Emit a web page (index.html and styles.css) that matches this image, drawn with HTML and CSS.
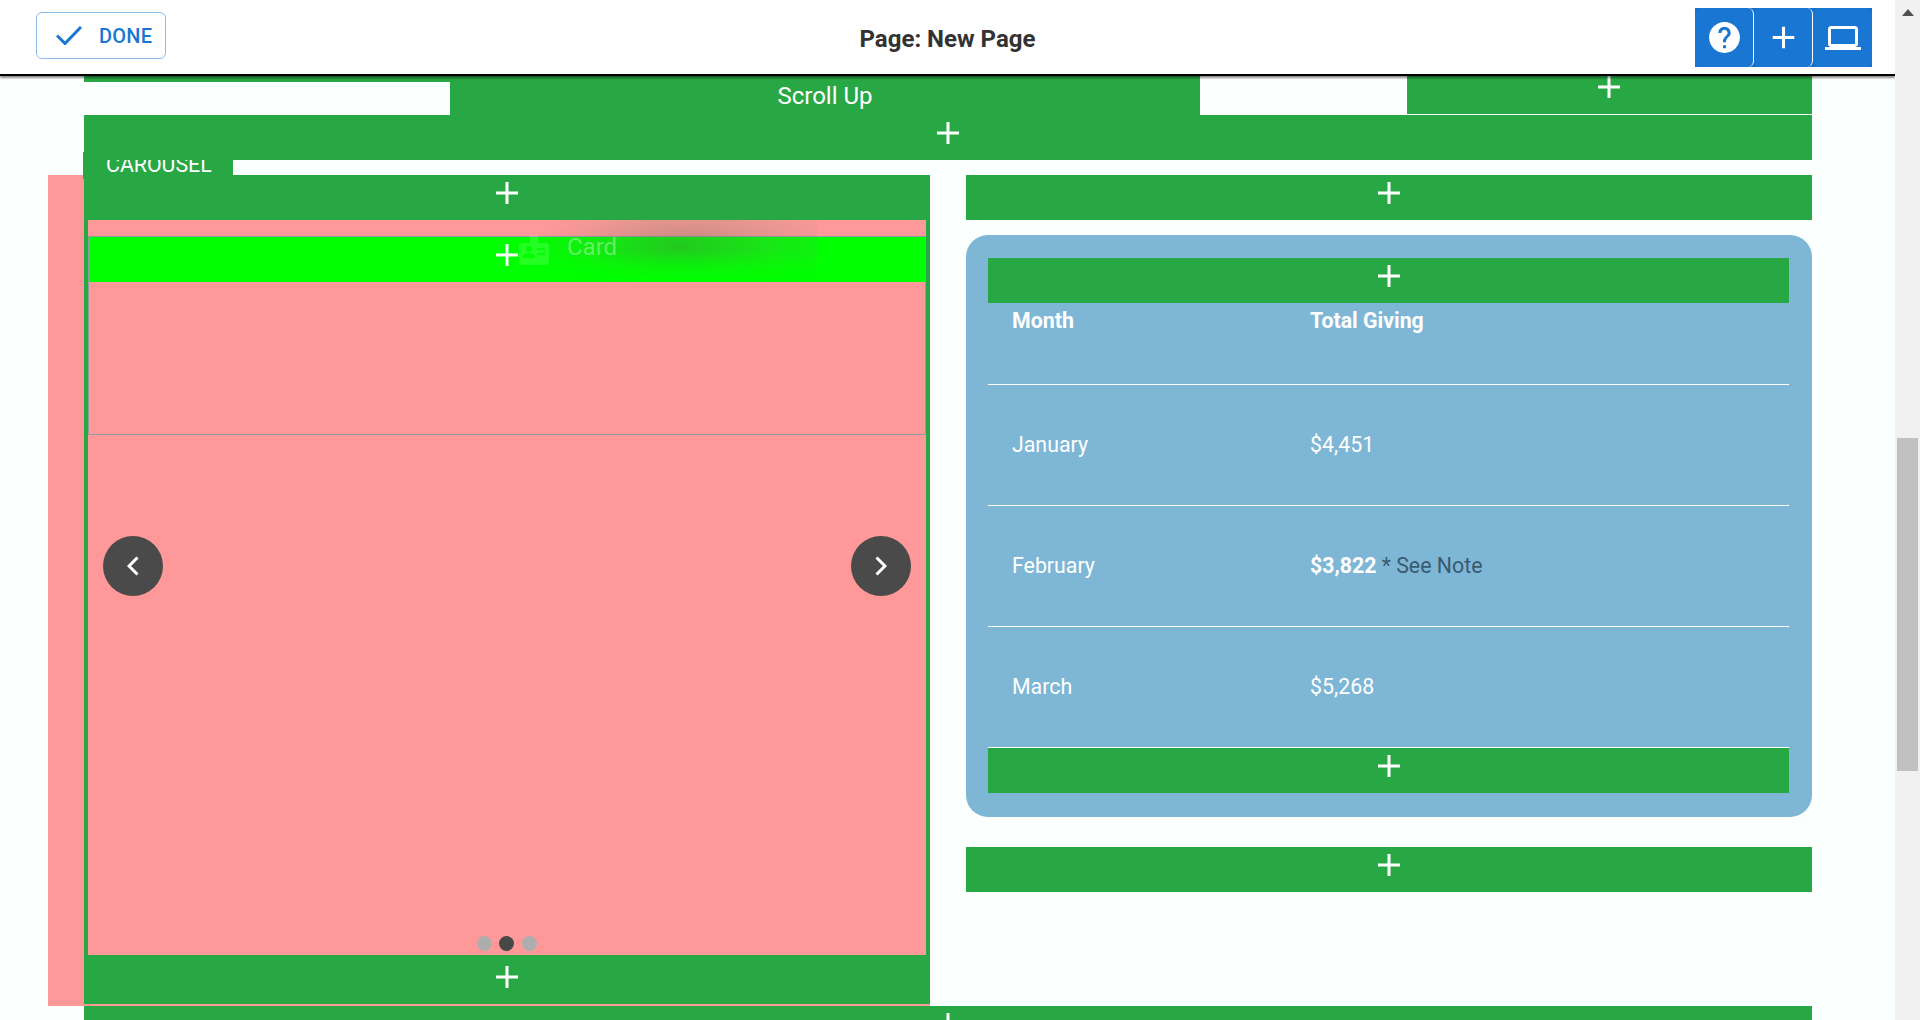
FILE: index.html
```html
<!DOCTYPE html>
<html lang="en">
<head>
<meta charset="utf-8">
<title>Page: New Page</title>
<link rel="stylesheet" href="styles.css">
</head>
<body>
<div class="app">
  <div class="main">
    <header class="topbar">
      <button class="done-btn">
        <svg class="done-check" viewBox="0 0 26 19" width="26" height="19"><polyline points="1,9.5 9,17.5 25,1" fill="none" stroke="#1976d2" stroke-width="3"/></svg>
        <span>DONE</span>
      </button>
      <h1 class="page-title">Page: New Page</h1>
      <div class="tool-group">
        <button class="tool-btn"><svg viewBox="0 0 24 24" width="37" height="37"><path fill="#fff" d="M12 2C6.48 2 2 6.48 2 12s4.48 10 10 10 10-4.48 10-10S17.52 2 12 2zm1 17h-2v-2h2v2zm2.07-7.75l-.9.92C13.45 12.9 13 13.5 13 15h-2v-.5c0-1.1.45-2.1 1.17-2.83l1.24-1.26c.37-.36.59-.86.59-1.41 0-1.1-.9-2-2-2s-2 .9-2 2H8c0-2.21 1.79-4 4-4s4 1.79 4 4c0 .88-.36 1.68-.93 2.25z"/></svg></button>
        <button class="tool-btn"><svg viewBox="0 0 24 24" width="37" height="37"><path fill="#fff" d="M19 13h-6v6h-2v-6H5v-2h6V5h2v6h6v2z"/></svg></button>
        <button class="tool-btn"><svg viewBox="0 0 24 24" width="36" height="36"><path fill="#fff" d="M20 18c1.1 0 1.99-.9 1.99-2L22 6c0-1.1-.9-2-2-2H4c-1.1 0-2 .9-2 2v10c0 1.1.9 2 2 2H0v2h24v-2h-4zM4 6h16v10H4V6z"/></svg></button>
      </div>
    </header>

    <div class="content">
      <div class="scroll-row">
        <div class="strip"></div>
        <div class="scroll-up">Scroll Up</div>
        <div class="spacer"></div>
        <div class="add-bar add-bar-short"><svg class="plus" viewBox="0 0 22 22"><path d="M11 0v22M0 11h22"/></svg></div>
      </div>
      <div class="add-bar add-bar-above"><svg class="plus" viewBox="0 0 22 22"><path d="M11 0v22M0 11h22"/></svg></div>

      <div class="columns">
        <section class="left-col">
          <div class="rail"></div>
          <div class="tab">CAROUSEL</div>
          <div class="add-bar"><svg class="plus" viewBox="0 0 22 22"><path d="M11 0v22M0 11h22"/></svg></div>
          <div class="carousel">
            <div class="slide">
              <div class="add-bar add-bar-lime"><svg class="plus" viewBox="0 0 22 22"><path d="M11 0v22M0 11h22"/></svg></div>
            </div>
            <div class="drag-ghost">
              <svg class="ghost-icon" viewBox="0 0 30 30" width="30" height="30"><path fill="#fff" fill-rule="evenodd" d="M11 0h8v8h8a3 3 0 0 1 3 3v16a3 3 0 0 1-3 3H3a3 3 0 0 1-3-3V11a3 3 0 0 1 3-3h8zM7 14a3 3 0 1 0 6 0 3 3 0 0 0-6 0zM4 23h12v-2c0-2-4-3-6-3s-6 1-6 3zM18 13v2h8v-2zM18 18v2h8v-2z"/></svg>
              <span class="ghost-label">Card</span>
            </div>
            <button class="arrow arrow-prev"><svg viewBox="0 0 12 20" width="12" height="20"><polyline points="10.5,1.5 2,10 10.5,18.5" fill="none" stroke="#fff" stroke-width="3"/></svg></button>
            <button class="arrow arrow-next"><svg viewBox="0 0 12 20" width="12" height="20"><polyline points="1.5,1.5 10,10 1.5,18.5" fill="none" stroke="#fff" stroke-width="3"/></svg></button>
            <div class="dots"><span class="dot"></span><span class="dot dot-active"></span><span class="dot"></span></div>
          </div>
          <div class="add-bar add-bar-bottom"><svg class="plus" viewBox="0 0 22 22"><path d="M11 0v22M0 11h22"/></svg></div>
        </section>

        <section class="right-col">
          <div class="add-bar"><svg class="plus" viewBox="0 0 22 22"><path d="M11 0v22M0 11h22"/></svg></div>
          <div class="giving-card">
            <div class="add-bar"><svg class="plus" viewBox="0 0 22 22"><path d="M11 0v22M0 11h22"/></svg></div>
            <div class="giving-table">
              <div class="t-row t-head"><div>Month</div><div>Total Giving</div></div>
              <div class="t-row"><div>January</div><div>$4,451</div></div>
              <div class="t-row"><div>February</div><div><strong>$3,822</strong> <span class="note">* See Note</span></div></div>
              <div class="t-row"><div>March</div><div>$5,268</div></div>
            </div>
            <div class="add-bar"><svg class="plus" viewBox="0 0 22 22"><path d="M11 0v22M0 11h22"/></svg></div>
          </div>
          <div class="add-bar"><svg class="plus" viewBox="0 0 22 22"><path d="M11 0v22M0 11h22"/></svg></div>
        </section>
      </div>

      <div class="add-bar"><svg class="plus" viewBox="0 0 22 22"><path d="M11 0v22M0 11h22"/></svg></div>
    </div>
  </div>

  <div class="scrollbar">
    <div class="scroll-arrow"></div>
    <div class="scroll-thumb"></div>
  </div>
</div>
</body>
</html>
```
FILE: styles.css
```css
* { box-sizing: border-box; }
html, body { margin: 0; height: 100%; overflow: hidden; }
body { font-family: Roboto, "Liberation Sans", sans-serif; background: #fbfffe; color: #fff; }
button { font-family: inherit; cursor: pointer; }

.app { display: flex; height: 1020px; overflow: hidden; }
.main { flex: 1; min-width: 0; overflow: hidden; }

.topbar {
  position: relative; z-index: 5;
  height: 76px;
  background: #fff;
  border-bottom: 2px solid #000;
  box-shadow: 0 2px 2px rgba(0,0,0,.45);
  display: flex; align-items: flex-start; justify-content: space-between;
  padding: 8px 23px 0 36px;
}
.done-btn {
  width: 130px; height: 47px; margin-top: 4px;
  background: #fff;
  border: 1px solid #8dbdec; border-radius: 6px;
  color: #1976d2;
  font-size: 20px; font-weight: 500; letter-spacing: .2px;
  display: flex; align-items: center; padding: 0 0 0 19px; gap: 17px;
}
.done-check { flex: none; }
.page-title {
  position: absolute; left: 0; right: 0; top: 23px;
  margin: 0; text-align: center;
  font-size: 24px; line-height: 32px; font-weight: 700; color: #333;
}
.tool-group { display: flex; background: #166fc7; height: 59px; }
.tool-btn {
  width: 59px; height: 59px; padding: 0;
  background: #1976d2;
  border: 0; border-right: 1px solid #fff; border-radius: 6px;
  display: flex; align-items: center; justify-content: center;
}
.tool-btn:last-child { border-right: 0; }

.content { padding: 0 83px 0 84px; }

.scroll-row { display: grid; grid-template-columns: 366px 750px 207px 405px; height: 39px; }
.strip { background: #28a745; height: 6px; }
.scroll-up {
  background: #28a745; text-align: center;
  font-size: 24px; line-height: 30px; padding-top: 5px;
}

.add-bar {
  position: relative;
  height: 45px; padding-top: 7px;
  background: #28a745;
  display: flex; justify-content: center; align-items: flex-start;
}
.plus { width: 22px; height: 22px; flex: none; }
.plus path { fill: none; stroke: #fff; stroke-width: 3; }

.add-bar-short { height: 39px; padding: 0 1px 0 0; border-bottom: 1px solid #fff; }
.add-bar-above { z-index: 2; }
.add-bar-lime { background: #0f0; }
.add-bar-bottom { height: 49px; padding-top: 11px; }

.columns { display: grid; grid-template-columns: 846px 846px; gap: 36px; margin-top: 15px; }

.left-col { position: relative; background: #ff9999; padding-bottom: 2px; height: 831px; }
.rail { position: absolute; left: -36px; top: 0; bottom: 0; width: 36px; background: #ff9999; }
.tab {
  position: absolute; left: -1px; top: -23px; z-index: 1;
  width: 150px; height: 27px;
  background: #28a745;
  font-size: 21.33px; line-height: 21px; padding: 2px 0 0 23px;
}
.left-col > .add-bar { z-index: 0; }

.carousel {
  position: relative;
  height: 735px; padding-top: 16px;
  background: #ff9999;
  border-left: 4px solid #28a745; border-right: 4px solid #28a745;
}
.slide { height: 199px; border: 1px solid #8f9f9f; padding: 0; }

.drag-ghost {
  position: absolute; left: 430px; top: 0; width: 299px; height: 62px;
  display: flex; align-items: flex-start; gap: 18px;
  padding: 15px 0 0 1px;
}
.drag-ghost::before {
  content: ""; position: absolute; inset: 0;
  background:
    radial-gradient(ellipse 150px 46px at 54% 42%, rgba(90,110,80,.36), rgba(110,130,100,.15) 60%, rgba(110,130,100,0) 100%),
    linear-gradient(to right, rgba(130,140,130,0) 25%, rgba(130,140,130,.08));
  -webkit-mask-image: linear-gradient(to bottom, #000 50%, transparent 100%);
  mask-image: linear-gradient(to bottom, #000 50%, transparent 100%);
}
.ghost-icon { position: relative; opacity: .14; flex: none; }
.ghost-label { position: relative; top: -1px; font-size: 24px; line-height: 26px; color: rgba(255,255,255,.35); }

.arrow {
  position: absolute; top: 316px;
  width: 60px; height: 60px; padding: 0;
  border: 0; border-radius: 50%;
  background: #4a4a4a;
  display: flex; align-items: center; justify-content: center;
}
.arrow-prev { left: 15px; }
.arrow-next { right: 15px; }

.dots { position: absolute; left: 0; right: 1px; bottom: 4px; display: flex; justify-content: center; gap: 7.5px; }
.dot { width: 15px; height: 15px; border-radius: 50%; background: #adadad; }
.dot-active { background: #484848; }

.giving-card {
  margin: 15px 0 30px;
  background: #7eb6d6;
  border-radius: 22px;
  padding: 23px 23px 24px 22px;
}
.t-row {
  display: grid; grid-template-columns: 298px 1fr; align-items: center;
  height: 121px; padding-left: 24px;
  border-bottom: 1px solid #fff;
  font-size: 21.33px; line-height: 24px;
}
.t-head { height: 82px; align-items: start; padding-top: 6px; font-weight: 700; }
.t-row strong { font-weight: 700; }
.note { color: #3a5a70; }

.scrollbar { position: relative; flex: none; width: 25px; background: #f1f1f1; }
.scroll-arrow {
  position: absolute; left: 7px; top: 9px; width: 0; height: 0;
  border-left: 6px solid transparent; border-right: 6px solid transparent;
  border-bottom: 7px solid #505050;
}
.scroll-thumb { position: absolute; left: 2px; right: 2px; top: 438px; height: 333px; background: #c1c1c1; }
```
